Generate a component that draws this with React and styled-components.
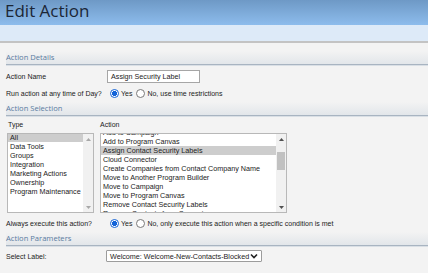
import React from 'react'
import styled, { createGlobalStyle } from 'styled-components'

const GlobalStyle = createGlobalStyle`
  html, body {
    margin: 0;
    padding: 0;
    background: #f3f3f3;
  }
  body {
    font-family: "Liberation Sans", Arial, sans-serif;
    color: #222;
  }
`

const Page = styled.div`
  width: 428px;
  height: 273px;
  overflow: hidden;
  background: #f3f3f3;
`

const TitleBar = styled.div`
  height: 25px;
  padding-left: 5px;
  background: linear-gradient(to bottom, #6e99c6 0%, #8dbcec 100%);
`

const Title = styled.h1`
  margin: 0;
  font-family: "Open Sans", sans-serif;
  font-weight: 400;
  font-size: 17px;
  line-height: 21px;
  color: #1b2636;
`

const Band = styled.div`
  height: 16px;
  background: #ddeaf8;
  border-bottom: 2px solid #c3c3c3;
`

const Body = styled.div`
  padding-left: 6px;
`

const SectionHeader = styled.div`
  margin-top: ${p => p.$top || 3}px;
  height: 13px;
  line-height: 13px;
  font-family: "Open Sans", sans-serif;
  font-size: 7.6px;
  color: #5a7ba0;
  background: linear-gradient(to bottom, rgba(228, 231, 235, 0) 0%, #e2e6ea 100%);
  border-bottom: 1px solid #a8b4c1;
  box-shadow: 0 1px 0 #d9dfe5;
`

const FormRow = styled.div`
  display: flex;
  align-items: center;
  height: ${p => p.$h || 12}px;
  margin-top: ${p => p.$top || 4}px;
  font-size: 7px;
`

const Label = styled.div`
  width: 100px;
  flex: none;
`

const TextInput = styled.div`
  box-sizing: border-box;
  width: 93px;
  height: 13px;
  margin-left: 1px;
  padding: 0 3px;
  border: 1px solid #a6a6a6;
  background: #fff;
  font-size: 7.2px;
  line-height: 11px;
  color: #222;
`

const RadioGroup = styled.div`
  display: flex;
  align-items: center;
  margin-left: 4px;
`

const RadioOption = styled.label`
  display: flex;
  align-items: center;
  margin-right: 4px;
  white-space: nowrap;
`

const RadioDot = styled.span`
  box-sizing: border-box;
  width: 9px;
  height: 9px;
  margin-right: 2px;
  border-radius: 50%;
  border: 1px solid ${p => (p.$on ? '#1464d8' : '#7a7a7a')};
  background: ${p => (p.$on ? 'radial-gradient(circle, #1464d8 0 2.3px, #fff 2.6px)' : '#fff')};
`

const Selection = styled.div`
  display: grid;
  grid-template-columns: 87px 187px;
  grid-template-rows: 10px 80px;
  column-gap: 6px;
  row-gap: 3px;
  margin-top: 4px;
  margin-left: 1px;
  font-size: 7px;
`

const ColumnLabel = styled.div`
  line-height: 10px;
  padding-left: ${p => p.$pad || 0}px;
`

const ListBox = styled.div`
  box-sizing: border-box;
  display: flex;
  height: 80px;
  border: 1px solid #b8b8b8;
  background: #fff;
  overflow: hidden;
`

const Items = styled.div`
  flex: 1;
  overflow: hidden;
`

const ItemsInner = styled.div`
  margin-top: ${p => p.$offset}px;
`

const Item = styled.div`
  height: 9px;
  line-height: 9px;
  padding-left: 2px;
  font-size: 7.2px;
  white-space: nowrap;
  background: ${p => (p.$selected ? '#cdcdcd' : 'transparent')};
`

const Scrollbar = styled.div`
  width: 10px;
  flex: none;
  display: flex;
  flex-direction: column;
  background: #f1f1f1;
`

const Arrow = styled.div`
  height: 10px;
  display: flex;
  align-items: center;
  justify-content: center;
`

const Track = styled.div`
  flex: 1;
  padding: 0 1px;
`

const Thumb = styled.div`
  height: ${p => p.$h}px;
  margin-top: ${p => p.$top}px;
  background: #c1c1c1;
`

const SelectBox = styled.div`
  box-sizing: border-box;
  display: flex;
  align-items: center;
  justify-content: space-between;
  width: 156px;
  height: 12px;
  padding: 0 3px 0 3px;
  border: 1px solid #9c9c9c;
  border-radius: 1px;
  background: #fff;
  font-size: 7.2px;
  white-space: nowrap;
`

const ArrowIcon = ({ up, color }) => (
  <svg width="5" height="3" viewBox="0 0 5 3">
    <path d={up ? 'M0 3 L2.5 0 L5 3 Z' : 'M0 0 L2.5 3 L5 0 Z'} fill={color} />
  </svg>
)

const Chevron = () => (
  <svg width="8" height="6" viewBox="0 0 8 6">
    <path d="M1 1.5 L4 4.5 L7 1.5" fill="none" stroke="#222" strokeWidth="1.6" />
  </svg>
)

const types = ['All', 'Data Tools', 'Groups', 'Integration', 'Marketing Actions', 'Ownership', 'Program Maintenance']

const actions = [
  'Add to Campaign',
  'Add to Program Canvas',
  'Assign Contact Security Labels',
  'Cloud Connector',
  'Create Companies from Contact Company Name',
  'Move to Another Program Builder',
  'Move to Campaign',
  'Move to Program Canvas',
  'Remove Contact Security Labels',
  'Remove Contacts from Campaign',
]

const List = ({ items, selected, offset, thumb, arrowColor }) => (
  <ListBox>
    <Items>
      <ItemsInner $offset={offset}>
        {items.map(item => (
          <Item key={item} $selected={item === selected}>{item}</Item>
        ))}
      </ItemsInner>
    </Items>
    <Scrollbar>
      <Arrow><ArrowIcon up color={arrowColor} /></Arrow>
      <Track>{thumb && <Thumb $top={thumb.top} $h={thumb.h} />}</Track>
      <Arrow><ArrowIcon color={arrowColor} /></Arrow>
    </Scrollbar>
  </ListBox>
)

const Radios = ({ no }) => (
  <RadioGroup>
    <RadioOption><RadioDot $on />Yes</RadioOption>
    <RadioOption><RadioDot />{no}</RadioOption>
  </RadioGroup>
)

export default function App() {
  return (
    <>
      <GlobalStyle />
      <Page>
        <TitleBar>
          <Title>Edit Action</Title>
        </TitleBar>
        <Band />
        <Body>
          <SectionHeader $top={8}>Action Details</SectionHeader>
          <FormRow $h={13} $top={5}>
            <Label>Action Name</Label>
            <TextInput>Assign Security Label</TextInput>
          </FormRow>
          <FormRow>
            <Label>Run action at any time of Day?</Label>
            <Radios no="No, use time restrictions" />
          </FormRow>

          <SectionHeader>Action Selection</SectionHeader>
          <Selection>
            <ColumnLabel $pad={1}>Type</ColumnLabel>
            <ColumnLabel>Action</ColumnLabel>
            <List items={types} selected="All" offset={-1} arrowColor="#a8a8a8" />
            <List
              items={actions}
              selected="Assign Contact Security Labels"
              offset={-6}
              thumb={{ top: 8, h: 18 }}
              arrowColor="#505050"
            />
          </Selection>
          <FormRow>
            <Label>Always execute this action?</Label>
            <Radios no="No, only execute this action when a specific condition is met" />
          </FormRow>

          <SectionHeader>Action Parameters</SectionHeader>
          <FormRow>
            <Label>Select Label:</Label>
            <SelectBox>
              <span>Welcome: Welcome-New-Contacts-Blocked</span>
              <Chevron />
            </SelectBox>
          </FormRow>
        </Body>
      </Page>
    </>
  )
}
